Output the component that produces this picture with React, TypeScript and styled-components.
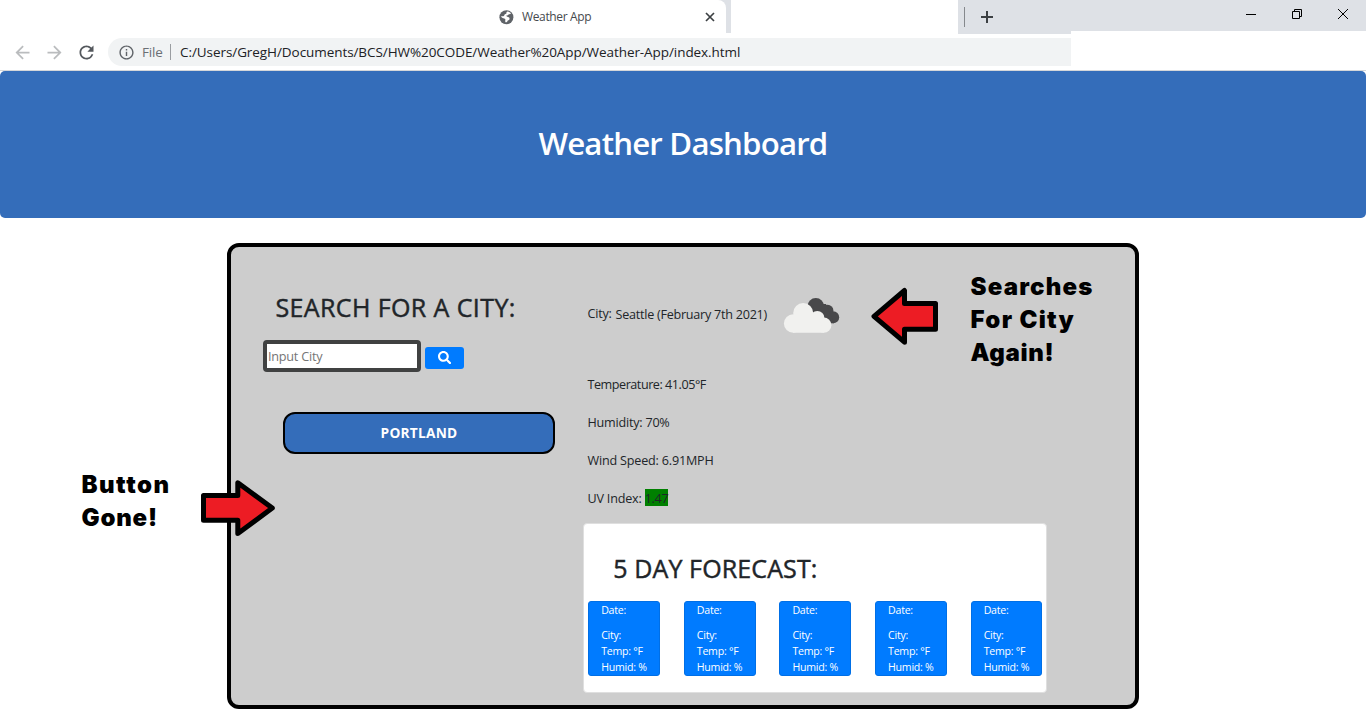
import React from 'react';
import styled, { createGlobalStyle } from 'styled-components';
import { MdArrowBack, MdArrowForward, MdRefresh, MdInfoOutline } from 'react-icons/md';
import { FaSearch } from 'react-icons/fa';

const GlobalStyle = createGlobalStyle`
  *, *::before, *::after { box-sizing: border-box; }
  html, body { margin: 0; padding: 0; background: #fff; }
  body {
    font-family: 'Open Sans', 'Noto Sans', sans-serif;
    color: #212529;
    overflow: hidden;
  }
  h1, h2, p { margin: 0; }
`;

const Page = styled.div`
  position: relative;
  width: 1366px;
  height: 724px;
  overflow: hidden;
  background: #fff;
`;

/* ---------- Browser chrome ---------- */

const Chrome = styled.header`
  height: 71px;
  border-bottom: 1px solid #d5d7da;
  background: #fff;
`;

const TabStrip = styled.div`
  display: flex;
  align-items: flex-start;
  height: 34px;
`;

const TabEdge = styled.div`
  width: 731px;
  height: 33px;
  background: linear-gradient(90deg, #fff 0 717px, #dee1e6 717px);
`;

const Tab = styled.div`
  display: flex;
  align-items: center;
  width: 726px;
  height: 33px;
  padding-left: 499px;
  border-radius: 0 8px 0 0;
  background: #fff;
`;

const TabTitle = styled.span`
  width: 183px;
  margin-left: 7px;
  font-size: 12px;
  line-height: 16px;
  letter-spacing: -0.35px;
  color: #45494d;
`;

const StripGap = styled.div`
  width: 227px;
`;

const NewTabArea = styled.div`
  display: flex;
  align-items: center;
  width: 113px;
  height: 34px;
  padding-left: 6px;
  background: #dee1e6;
`;

const StripDivider = styled.span`
  width: 1px;
  height: 20px;
  margin-right: 16px;
  background: #85888c;
`;

const WindowControls = styled.div`
  display: flex;
  gap: 36px;
  width: 295px;
  height: 31px;
  padding: 9px 0 0 175px;
  background: #dee1e6;
`;

const Toolbar = styled.div`
  display: flex;
  align-items: center;
  height: 36px;
  padding-left: 11.5px;
  color: #5f6368;
`;

const NavIcon = styled.span<{ $muted?: boolean }>`
  display: flex;
  width: 22px;
  margin-right: 10px;
  font-size: 21px;
  color: ${(p) => (p.$muted ? '#babcbe' : '#54585d')};
`;

const AddressBar = styled.div`
  display: flex;
  align-items: center;
  width: 963px;
  height: 28px;
  margin-left: 0.5px;
  padding-left: 10px;
  border-radius: 14px 0 0 14px;
  background: #f1f3f4;
  font-size: 13.5px;
  line-height: 20px;
`;

const Scheme = styled.span`
  width: 28px;
  margin-left: 7px;
  letter-spacing: -0.15px;
  color: #6b6f74;
`;

const Url = styled.span`
  margin-left: 9px;
  letter-spacing: -0.07px;
  color: #202124;
  white-space: nowrap;
`;

const AddressDivider = styled.span`
  width: 1px;
  height: 16px;
  background: #9a9da1;
`;

/* ---------- Page content ---------- */

const Hero = styled.section`
  display: flex;
  justify-content: center;
  height: 147px;
  padding-top: 48px;
  border-radius: 5px;
  background: #346dba;
`;

const HeroTitle = styled.h1`
  font-size: 31.2px;
  line-height: 48px;
  font-weight: 600;
  letter-spacing: -0.8px;
  color: #fff;
  white-space: nowrap;
`;

const Panel = styled.main`
  display: flex;
  width: 912px;
  height: 466px;
  margin: 25px auto 0;
  border: 4px solid #000;
  border-radius: 12px;
  background: #cdcdcd;
`;

const SearchColumn = styled.section`
  width: 352px;
  padding: 41px 0 0 32px;
`;

const Heading = styled.h2<{ $tracking: number }>`
  font-size: 25px;
  line-height: 38px;
  font-weight: 400;
  -webkit-text-stroke: 0.45px #212529;
  letter-spacing: ${(p) => p.$tracking}px;
  white-space: nowrap;
`;

const SearchHeading = styled(Heading)`
  margin-left: 12.4px;
`;

const SearchRow = styled.form`
  display: flex;
  align-items: center;
  gap: 4px;
  margin-top: 14px;
`;

const CityInput = styled.input`
  width: 158px;
  height: 32px;
  padding: 0 1px;
  border: 4px solid #404141;
  border-radius: 4px;
  outline: none;
  background: #fff;
  font: 12.7px 'Open Sans', sans-serif;
  letter-spacing: -0.25px;
  &::placeholder { color: #757575; opacity: 1; }
`;

const SearchButton = styled.button`
  display: flex;
  align-items: center;
  justify-content: center;
  width: 39px;
  height: 22px;
  margin-top: 4px;
  padding: 0 0 1px;
  border: 0;
  border-radius: 3px;
  background: #007bff;
  color: #fff;
  font-size: 13.3px;
`;

const CityButton = styled.button`
  display: block;
  width: 272px;
  height: 42px;
  margin: 40px 0 0 20px;
  padding: 0;
  border: 2px solid #000;
  border-radius: 12px;
  background: #346dba;
  color: #fff;
  font: 700 13.7px/38px 'Open Sans', sans-serif;
  letter-spacing: 0.25px;
`;

const WeatherColumn = styled.section`
  padding-top: 42px;
`;

const CityRow = styled.div`
  display: flex;
  align-items: flex-start;
  height: 77px;
  padding: 16px 0 0 4.5px;
  font-size: 12.6px;
  line-height: 17px;
  letter-spacing: -0.2px;
  white-space: nowrap;

  svg { margin-top: -8px; }
`;

const CityLabel = styled.span`
  width: 28px;
`;

const CityName = styled.span`
  width: 167.5px;
  padding-top: 1px;
  letter-spacing: -0.25px;
`;

const Reading = styled.p<{ $tracking: number }>`
  height: 38px;
  padding: 10px 0 0 4.5px;
  font-size: 12.6px;
  line-height: 17px;
  letter-spacing: ${(p) => p.$tracking}px;
  white-space: nowrap;
`;

const UvBadge = styled.span`
  display: inline-block;
  width: 23px;
  height: 17px;
  margin-top: -1px;
  background: #008000;
  line-height: 19px;
  vertical-align: top;
  letter-spacing: -0.3px;
`;

const Forecast = styled.section`
  width: 464px;
  height: 170px;
  margin-top: 5px;
  padding: 25px 3.5px 0 4.2px;
  border: 1px solid #dfdfdf;
  border-radius: 4px;
  background: #fff;
`;

const ForecastHeading = styled(Heading)`
  margin-left: 25px;
`;

const Days = styled.div`
  display: flex;
  justify-content: space-between;
  margin-top: 14px;
`;

const DayCard = styled.article`
  width: 71.8px;
  height: 75px;
  padding: 0 0 0 12px;
  border: 1px solid #006fe6;
  border-radius: 3px;
  background: #007bff;
  color: #fff;
  font-size: 10.6px;
  line-height: 16px;
  letter-spacing: -0.25px;
  white-space: nowrap;
`;

const DayDate = styled.p`
  margin-bottom: 9px;
`;

/* ---------- Annotations laid over the page ---------- */

const Note = styled.div<{ $x: number; $y: number }>`
  position: absolute;
  left: ${(p) => p.$x}px;
  top: ${(p) => p.$y}px;
  font: 900 24px/33px Inter, 'Liberation Sans', sans-serif;
  color: #000;
  white-space: nowrap;
`;

const NoteLine = styled.div<{ $tracking: number }>`
  letter-spacing: ${(p) => p.$tracking}px;
`;

const ArrowSvg = styled.svg<{ $x: number; $y: number }>`
  position: absolute;
  left: ${(p) => p.$x}px;
  top: ${(p) => p.$y}px;
  fill: #ed1c24;
  stroke: #000;
  stroke-width: 5;
  stroke-linejoin: round;
`;

const GlobeIcon = () => (
  <svg width="16" height="16" viewBox="0 0 16 16" fill="none">
    <circle cx="7.4" cy="8.2" r="7" fill="#5f6368" />
    <path
      d="M8.2 2.6Q10.6 2.6 12 4.2Q11.6 5.4 9.8 5.3Q9.2 6.6 7.4 6.6Q7.2 8 9 8Q10.8 8.2 10.6 10Q10.3 11.3 8.8 11.4Q8.4 13 7 13.4Q6 13.2 6.2 11.6Q7 10.4 5.2 9.6Q3.6 9.6 1.7 7.6Q2 7 4 7.2Q5.4 7.4 5.4 5.8Q6.4 4.8 7.4 4.8Q7 3.4 8.2 2.6Z"
      fill="#fff"
    />
  </svg>
);

const CloudIcon = () => (
  <svg width="58" height="38" viewBox="783 297 58 38">
    <g fill="#48484a">
      <circle cx="815.8" cy="306.3" r="8.3" />
      <circle cx="827.6" cy="310.5" r="5.8" />
      <circle cx="833.2" cy="317.2" r="6" />
      <path d="M812 304h14l8 19.2h-14z" />
    </g>
    <g fill="#f1f1ef">
      <circle cx="803.2" cy="313" r="10" />
      <circle cx="793.2" cy="323.5" r="9.3" />
      <circle cx="817.3" cy="318.2" r="7.2" />
      <circle cx="823.8" cy="325.2" r="7.6" />
      <path d="M793 315h25l6 17.8h-31z" />
    </g>
  </svg>
);

const days = [1, 2, 3, 4, 5];

export default function App() {
  return (
    <Page>
      <GlobalStyle />
      <Chrome>
        <TabStrip>
          <TabEdge>
            <Tab>
              <GlobeIcon />
              <TabTitle>Weather App</TabTitle>
              <svg width="10" height="10" viewBox="0 0 10 10" stroke="#3c4043" strokeWidth="1.7">
                <path d="M1 1l8 8M9 1L1 9" />
              </svg>
            </Tab>
          </TabEdge>
          <StripGap />
          <NewTabArea>
            <StripDivider />
            <svg width="12" height="12" viewBox="0 0 12 12" stroke="#3c4043" strokeWidth="2">
              <path d="M6 0v12M0 6h12" />
            </svg>
          </NewTabArea>
          <WindowControls>
            <svg width="10" height="10" viewBox="0 0 10 10" fill="none" stroke="#000">
              <path d="M0 5.5h10" />
            </svg>
            <svg width="10" height="10" viewBox="0 0 10 10" fill="none" stroke="#000">
              <path d="M.5 2.5h7v7h-7zM2.5 2.5v-2h7v7h-2" />
            </svg>
            <svg width="10" height="10" viewBox="0 0 10 10" fill="none" stroke="#000">
              <path d="M0 0l10 10M10 0L0 10" />
            </svg>
          </WindowControls>
        </TabStrip>
        <Toolbar>
          <NavIcon $muted><MdArrowBack /></NavIcon>
          <NavIcon $muted><MdArrowForward /></NavIcon>
          <NavIcon><MdRefresh /></NavIcon>
          <AddressBar>
            <MdInfoOutline size={17} />
            <Scheme>File</Scheme>
            <AddressDivider />
            <Url>C:/Users/GregH/Documents/BCS/HW%20CODE/Weather%20App/Weather-App/index.html</Url>
          </AddressBar>
        </Toolbar>
      </Chrome>

      <Hero>
        <HeroTitle>Weather Dashboard</HeroTitle>
      </Hero>

      <Panel>
        <SearchColumn>
          <SearchHeading $tracking={0.4}>SEARCH FOR A CITY:</SearchHeading>
          <SearchRow>
            <CityInput placeholder="Input City" />
            <SearchButton type="button" aria-label="Search"><FaSearch /></SearchButton>
          </SearchRow>
          <CityButton>PORTLAND</CityButton>
        </SearchColumn>

        <WeatherColumn>
          <CityRow>
            <CityLabel>City:</CityLabel>
            <CityName>Seattle (February 7th 2021)</CityName>
            <CloudIcon />
          </CityRow>
          <Reading $tracking={-0.46}>Temperature: 41.05°F</Reading>
          <Reading $tracking={-0.22}>Humidity: 70%</Reading>
          <Reading $tracking={-0.19}>Wind Speed: 6.91MPH</Reading>
          <Reading $tracking={-0.2}>UV Index: <UvBadge>1.47</UvBadge></Reading>
          <Forecast>
            <ForecastHeading $tracking={0.12}>5 DAY FORECAST:</ForecastHeading>
            <Days>
              {days.map((d) => (
                <DayCard key={d}>
                  <DayDate>Date:</DayDate>
                  <p>City:</p>
                  <p>Temp: °F</p>
                  <p>Humid: %</p>
                </DayCard>
              ))}
            </Days>
          </Forecast>
        </WeatherColumn>
      </Panel>

      <Note $x={970.5} $y={270}>
        <NoteLine $tracking={1.2}>Searches</NoteLine>
        <NoteLine $tracking={1.3}>For City</NoteLine>
        <NoteLine $tracking={0.7}>Again!</NoteLine>
      </Note>
      <ArrowSvg $x={870} $y={287} width="69" height="59" viewBox="870 287 69 59">
        <path d="M874 316.3L904.5 290.5V303.5H935.5V329.2H904.5V342.2Z" />
      </ArrowSvg>
      <Note $x={81.5} $y={468}>
        <NoteLine $tracking={1.5}>Button</NoteLine>
        <NoteLine $tracking={0.8}>Gone!</NoteLine>
      </Note>
      <ArrowSvg $x={200} $y={479} width="76" height="58" viewBox="200 479 76 58">
        <path d="M272.3 508L237.8 482.8V495.5H203.5V520.2H237.8V533.5Z" />
      </ArrowSvg>
    </Page>
  );
}
